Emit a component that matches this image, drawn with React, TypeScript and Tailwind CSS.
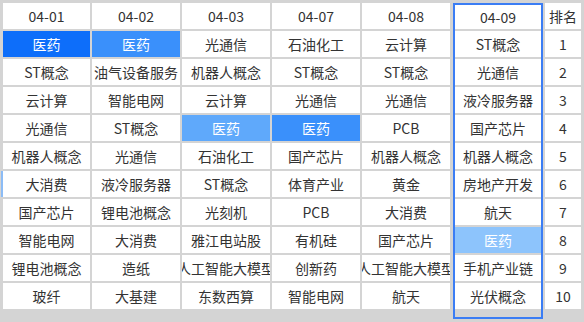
import React from "react";

type Cell = { t: string; hl?: string };

const cols: { head: string; cells: Cell[] }[] = [
  {
    head: "04-01",
    cells: [
      { t: "医药", hl: "bg-[#0d6efa]" },
      { t: "ST概念" },
      { t: "云计算" },
      { t: "光通信" },
      { t: "机器人概念" },
      { t: "大消费" },
      { t: "国产芯片" },
      { t: "智能电网" },
      { t: "锂电池概念" },
      { t: "玻纤" },
    ],
  },
  {
    head: "04-02",
    cells: [
      { t: "医药", hl: "bg-[#3a90fb]" },
      { t: "油气设备服务" },
      { t: "智能电网" },
      { t: "ST概念" },
      { t: "光通信" },
      { t: "液冷服务器" },
      { t: "锂电池概念" },
      { t: "大消费" },
      { t: "造纸" },
      { t: "大基建" },
    ],
  },
  {
    head: "04-03",
    cells: [
      { t: "光通信" },
      { t: "机器人概念" },
      { t: "云计算" },
      { t: "医药", hl: "bg-[#5fa9fb]" },
      { t: "石油化工" },
      { t: "ST概念" },
      { t: "光刻机" },
      { t: "雅江电站股" },
      { t: "人工智能大模型" },
      { t: "东数西算" },
    ],
  },
  {
    head: "04-07",
    cells: [
      { t: "石油化工" },
      { t: "ST概念" },
      { t: "光通信" },
      { t: "医药", hl: "bg-[#3a90fb]" },
      { t: "国产芯片" },
      { t: "体育产业" },
      { t: "PCB" },
      { t: "有机硅" },
      { t: "创新药" },
      { t: "智能电网" },
    ],
  },
  {
    head: "04-08",
    cells: [
      { t: "云计算" },
      { t: "ST概念" },
      { t: "光通信" },
      { t: "PCB" },
      { t: "机器人概念" },
      { t: "黄金" },
      { t: "大消费" },
      { t: "国产芯片" },
      { t: "人工智能大模型" },
      { t: "航天" },
    ],
  },
];

const last: Cell[] = [
  { t: "ST概念" },
  { t: "光通信" },
  { t: "液冷服务器" },
  { t: "国产芯片" },
  { t: "机器人概念" },
  { t: "房地产开发" },
  { t: "航天" },
  { t: "医药", hl: "bg-[#8dc4fc]" },
  { t: "手机产业链" },
  { t: "光伏概念" },
];

function CellBox({ c, h = "h-[26px]", extra = "" }: { c: Cell; h?: string; extra?: string }) {
  return (
    <div
      className={`${h} flex items-center justify-center overflow-hidden whitespace-nowrap text-[14px] leading-none ${
        c.hl ? `${c.hl} text-white` : "bg-white text-[#333333]"
      } ${extra}`}
    >
      <span className="shrink-0">{c.t}</span>
    </div>
  );
}

export default function App() {
  return (
    <div
      className="w-[584px] h-[322px] bg-[#d4d4d4] pt-[3px] pl-[3px] flex gap-[2px] overflow-hidden"
      style={{ fontFamily: '"Noto Sans CJK SC", "Noto Sans", sans-serif' }}
    >
      {cols.map((col, i) => (
        <div key={col.head} className={`${i === 0 ? "w-[87px]" : "w-[88px]"} flex flex-col gap-[2px] shrink-0`}>
          <CellBox c={{ t: col.head }} />
          {col.cells.map((c, j) => (
            <CellBox
              key={j}
              c={c}
              extra={i === 0 && j === 5 ? "shadow-[-2px_0_0_0_#8cbcf6]" : ""}
            />
          ))}
        </div>
      ))}
      <div className="ml-[1px] w-[90px] shrink-0 h-[316px] border-2 border-[#3b7df4] flex flex-col gap-[2px]">
        <CellBox c={{ t: "04-09" }} h="h-[24px]" />
        {last.map((c, j) => (
          <CellBox key={j} c={c} />
        ))}
      </div>
      <div className="w-[36px] shrink-0 flex flex-col gap-[2px]">
        <CellBox c={{ t: "排名" }} />
        {Array.from({ length: 10 }, (_, k) => (
          <CellBox key={k} c={{ t: String(k + 1) }} />
        ))}
      </div>
    </div>
  );
}
